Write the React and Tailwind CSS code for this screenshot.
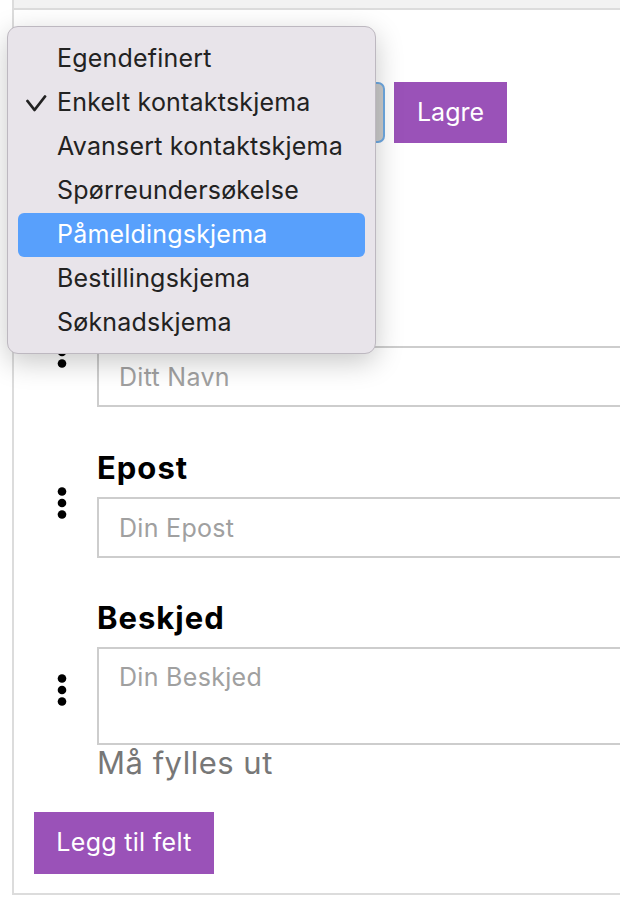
import React from "react";

const options = [
  "Egendefinert",
  "Enkelt kontaktskjema",
  "Avansert kontaktskjema",
  "Spørreundersøkelse",
  "Påmeldingskjema",
  "Bestillingskjema",
  "Søknadskjema",
];

// vertical ellipsis drag handle
function Handle() {
  return (
    <svg width="12" height="34" viewBox="0 0 12 34" className="block">
      <circle cx="6" cy="4.5" r="4.3" fill="#000" />
      <circle cx="6" cy="16" r="4.3" fill="#000" />
      <circle cx="6" cy="27.5" r="4.3" fill="#000" />
    </svg>
  );
}

function Field({ label, placeholder, area, required, className = "" }) {
  return (
    <div className={`flex items-center ${className}`}>
      <div className="w-[83px] shrink-0 pl-[42px]">
        <Handle />
      </div>
      <div className="flex-1">
        <div className="h-[36px] text-[31px] leading-[36px] tracking-[1px] font-bold text-black">
          {label}
        </div>
        {area ? (
          <textarea
            readOnly
            placeholder={placeholder}
            className="mt-[11px] block w-full h-[98px] border-2 border-[#cdcdcd] bg-white px-[20px] pt-[10px] text-[25px] tracking-[0.3px] leading-[36px] resize-none outline-none placeholder:text-[#a0a0a0]"
          />
        ) : (
          <input
            readOnly
            placeholder={placeholder}
            className="mt-[11px] block w-full h-[61px] border-2 border-[#cdcdcd] bg-white px-[20px] text-[25px] tracking-[0.3px] outline-none placeholder:text-[#a0a0a0]"
          />
        )}
        {required && (
          <div className="h-[36px] text-[31px] leading-[36px] tracking-[0.5px] text-[#777777]">
            Må fylles ut
          </div>
        )}
      </div>
    </div>
  );
}

export default function App() {
  return (
    <div className="relative min-h-[910px] w-[620px] overflow-hidden bg-white font-['Inter',sans-serif]">
      <div className="ml-[12px] w-[720px] border-l-2 border-b-2 border-[#dcdcdc]">
        <div className="h-[10px] bg-[#f2f2f2] border-b-2 border-[#dcdcdc]" />

        <div className="pt-[72px] pl-[20px] flex gap-[9px]">
          <div className="w-[351px] h-[61px] rounded-[7px] border-2 border-[#6ea9e2] bg-[#cbcbcb]" />
          <button className="w-[113px] h-[61px] bg-[#9a52b8] text-white text-[25px]">
            Lagre
          </button>
        </div>

        {/* name field: its label sits under the open menu */}
        <Field label="" placeholder="Ditt Navn" className="mt-[156px]" />
        <Field label="Epost" placeholder="Din Epost" className="mt-[43px]" />
        <Field
          label="Beskjed"
          placeholder="Din Beskjed"
          area
          required
          className="mt-[42px]"
        />

        <div className="pl-[20px] mt-[31px] pb-[19px]">
          <button className="w-[180px] h-[62px] bg-[#9a52b8] text-white text-[25px] tracking-[0.3px]">
            Legg til felt
          </button>
        </div>
      </div>

      {/* open native select menu */}
      <div className="absolute left-[7px] top-[26px] w-[369px] h-[328px] rounded-[11px] border border-[#bdb8c0] bg-[#e8e4ea] px-[10px] pt-[10px] shadow-[0_8px_28px_rgba(0,0,0,0.22)]">
        {options.map((opt, i) => (
          <div
            key={opt}
            className={`relative flex h-[44px] items-center rounded-[6px] pl-[39px] text-[25px] tracking-[0.2px] ${
              i === 4 ? "bg-[#58a0fc] text-white" : "text-[#222222]"
            }`}
          >
            {i === 1 && (
              <svg
                width="21"
                height="17"
                viewBox="0 0 21 17"
                className="absolute left-[8px] top-[14px]"
              >
                <polyline
                  points="1.5,6 8.5,15 19,1.5"
                  fill="none"
                  stroke="#222"
                  strokeWidth="2.8"
                  strokeLinecap="round"
                  strokeLinejoin="round"
                />
              </svg>
            )}
            {opt}
          </div>
        ))}
      </div>
    </div>
  );
}
